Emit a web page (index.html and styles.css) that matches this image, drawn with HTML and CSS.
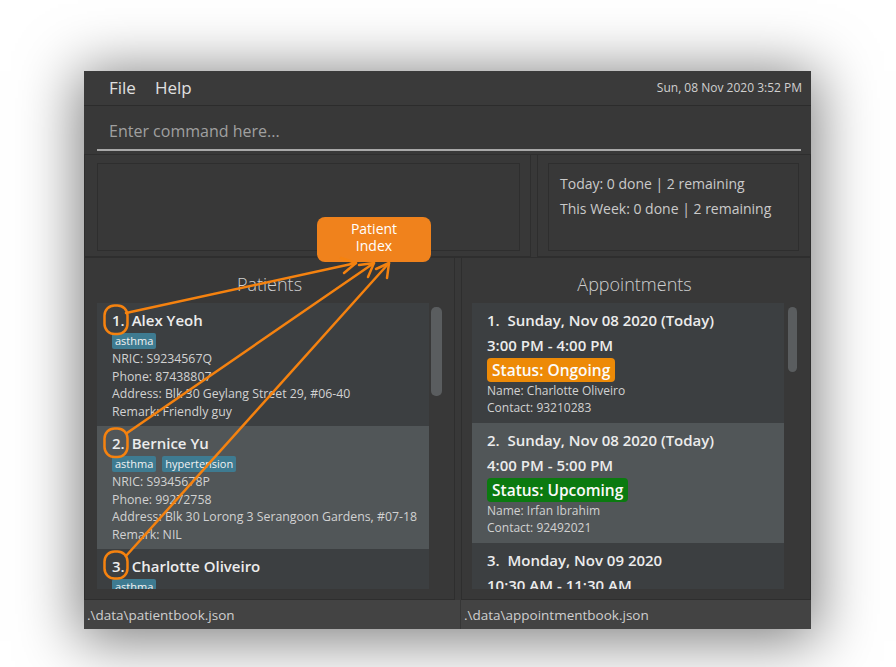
FILE: index.html
```html
<!DOCTYPE html>
<html>
<head>
<meta charset="utf-8">
<link rel="stylesheet" href="styles.css">
</head>
<body>
<div class="window">
  <div class="menubar">
    <div class="menus"><span>File</span><span>Help</span></div>
    <div class="clock">Sun, 08 Nov 2020 3:52 PM</div>
  </div>
  <div class="command">
    <div class="cmd-input">Enter command here...</div>
  </div>
  <div class="top-row">
    <div class="pane pane-left"><div class="box"></div></div>
    <div class="pane pane-right">
      <div class="box stats">
        <div>Today: 0 done | 2 remaining</div>
        <div>This Week: 0 done | 2 remaining</div>
      </div>
    </div>
  </div>
  <div class="lists">
    <div class="panel panel-left">
      <div class="panel-title">Patients</div>
      <div class="list-wrap">
        <div class="list">
          <div class="pcard dark">
            <div class="pname"><span class="idx">1.</span>Alex Yeoh</div>
            <div class="tags"><span class="tag">asthma</span></div>
            <div class="line">NRIC: S9234567Q</div>
            <div class="line">Phone: 87438807</div>
            <div class="line">Address: Blk 30 Geylang Street 29, #06-40</div>
            <div class="line">Remark: Friendly guy</div>
          </div>
          <div class="pcard light">
            <div class="pname"><span class="idx">2.</span>Bernice Yu</div>
            <div class="tags"><span class="tag">asthma</span><span class="tag">hypertension</span></div>
            <div class="line">NRIC: S9345678P</div>
            <div class="line">Phone: 99272758</div>
            <div class="line">Address: Blk 30 Lorong 3 Serangoon Gardens, #07-18</div>
            <div class="line">Remark: NIL</div>
          </div>
          <div class="pcard dark last">
            <div class="pname"><span class="idx">3.</span>Charlotte Oliveiro</div>
            <div class="tags"><span class="tag">asthma</span></div>
          </div>
        </div>
        <div class="scroll"><div class="thumb thumb-left"></div></div>
      </div>
    </div>
    <div class="panel panel-right">
      <div class="panel-title">Appointments</div>
      <div class="list-wrap">
        <div class="list">
          <div class="acard dark">
            <div class="adate">1.&nbsp; Sunday, Nov 08 2020 (Today)</div>
            <div class="atime">3:00 PM - 4:00 PM</div>
            <div class="status ongoing">Status: Ongoing</div>
            <div class="aline">Name: Charlotte Oliveiro</div>
            <div class="aline">Contact: 93210283</div>
          </div>
          <div class="acard light">
            <div class="adate">2.&nbsp; Sunday, Nov 08 2020 (Today)</div>
            <div class="atime">4:00 PM - 5:00 PM</div>
            <div class="status upcoming">Status: Upcoming</div>
            <div class="aline">Name: Irfan Ibrahim</div>
            <div class="aline">Contact: 92492021</div>
          </div>
          <div class="acard dark last">
            <div class="adate">3.&nbsp; Monday, Nov 09 2020</div>
            <div class="atime">10:30 AM - 11:30 AM</div>
          </div>
        </div>
        <div class="scroll"><div class="thumb thumb-right"></div></div>
      </div>
    </div>
  </div>
  <div class="statusbar">
    <div class="sb sb-left">.\data\patientbook.json</div>
    <div class="sb sb-right">.\data\appointmentbook.json</div>
  </div>
</div>

<div class="callout">Patient<br>Index</div>
<svg class="annot" width="896" height="667" viewBox="0 0 896 667">
  <g fill="none" stroke="#f5820f" stroke-width="2.5" stroke-linecap="round" stroke-linejoin="round">
    <rect x="104.5" y="305.5" width="23" height="28.5" rx="10"/>
    <rect x="104.5" y="428.5" width="23" height="28.5" rx="10"/>
    <rect x="104.5" y="551.5" width="23" height="27" rx="10"/>
    <line x1="126" y1="313" x2="356" y2="263"/>
    <polyline points="341,258 356,263 344,273"/>
    <line x1="127" y1="433" x2="374" y2="263"/>
    <polyline points="359,265 374,263 368,277"/>
    <line x1="126" y1="556" x2="389" y2="263"/>
    <polyline points="376,269 389,263 387,278"/>
  </g>
</svg>
</body>
</html>
```
FILE: styles.css
```css
* { box-sizing: border-box; }
html, body { margin: 0; padding: 0; }
body {
  width: 896px;
  height: 667px;
  background: #ffffff;
  font-family: "Open Sans", "Noto Sans", sans-serif;
  position: relative;
  overflow: hidden;
  padding-top: 71px;
  padding-left: 84px;
}
.window {
  width: 727px;
  height: 558px;
  background: #383838;
  display: flex;
  flex-direction: column;
  box-shadow: 0 6px 55px 6px rgba(0, 0, 0, 0.5);
}
.menubar {
  height: 35px;
  flex: none;
  background: #3a3a3a;
  border-bottom: 1px solid #2c2c2c;
  display: flex;
  align-items: center;
  justify-content: space-between;
  padding: 0 9px 1px 25px;
}
.menus { display: flex; gap: 19px; color: #e0e0e0; font-size: 17px; }
.clock { color: #d0d0d0; font-size: 12px; }
.command {
  height: 49px;
  flex: none;
  padding: 6px 10px 3px 13px;
  background: #383838;
  border-bottom: 1px solid #2e2e2e;
}
.cmd-input {
  height: 100%;
  border-bottom: 2px solid #a8a8a8;
  color: #a0a0a0;
  font-size: 16px;
  padding-left: 12px;
  display: flex;
  align-items: center;
}
.top-row {
  height: 103px;
  flex: none;
  display: flex;
  gap: 6px;
  border-bottom: 1px solid #2e2e2e;
}
.pane {
  border: 1px solid #2e2e2e;
  border-top: none;
  padding: 8px 10px 5px 12px;
  display: flex;
}
.pane-left { width: 447px; }
.pane-right { flex: 1; padding: 8px 11px 5px 10px; }
.box {
  flex: 1;
  border: 1px solid #2e2e2e;
}
.stats {
  color: #cacaca;
  font-size: 14px;
  line-height: 24.5px;
  padding: 8px 0 0 11px;
}
.lists {
  flex: 1;
  display: flex;
  gap: 6px;
  min-height: 0;
}
.panel {
  border: 1px solid #2e2e2e;
  border-top: none;
  display: flex;
  flex-direction: column;
  padding-bottom: 10px;
}
.panel-left { width: 371px; padding-left: 12px; padding-right: 12px; }
.panel-right { flex: 1; padding-left: 10px; padding-right: 13px; }
.panel-title {
  height: 45px;
  flex: none;
  text-align: center;
  color: #cfcfcf;
  font-size: 18px;
  font-weight: 300;
  line-height: 53px;
}
.list-wrap {
  flex: 1;
  display: flex;
  min-height: 0;
}
.list {
  flex: 1;
  overflow: hidden;
  background: #3c3f41;
}
.scroll { width: 13px; flex: none; padding: 4px 0 0 2px; }
.panel-right .scroll { padding-left: 4px; }
.thumb { width: 11px; background: #5a5d5f; border-radius: 5px; }
.panel-right .thumb { width: 9px; }
.thumb-left { height: 89px; }
.thumb-right { height: 65px; }
.dark { background: #3c3f41; }
.light { background: #515658; }
.pcard {
  height: 123px;
  padding: 6px 15px 0 15px;
  color: #d2d2d2;
  font-size: 12.3px;
}
.pcard.last { height: 41px; overflow: hidden; }
.acard.last { height: 47px; overflow: hidden; }
.pname {
  height: 22px;
  line-height: 22px;
  font-size: 15px;
  font-weight: 600;
  color: #ececec;
}
.idx { margin-right: 7px; }
.tags { display: flex; gap: 6px; margin-top: 2px; height: 16px; margin-bottom: 1px; }
.tag {
  background: #3e7b91;
  color: #f2f2f2;
  font-size: 11px;
  line-height: 16px;
  padding: 0 3px;
  border-radius: 2px;
}
.line { line-height: 17.5px; height: 17.5px; white-space: nowrap; }
.acard {
  height: 120px;
  padding: 6px 15px 0 15px;
  color: #d2d2d2;
}
.adate, .atime {
  font-size: 15px;
  font-weight: 600;
  color: #ececec;
  line-height: 22px;
  height: 22px;
  white-space: nowrap;
}
.atime { margin-top: 3px; }
.status {
  display: inline-block;
  margin-top: 2px;
  height: 24px;
  line-height: 24px;
  padding: 0 5px;
  border-radius: 4px;
  color: #fbfbfb;
  font-size: 15.5px;
  font-weight: 600;
}
.ongoing { background: #ed8a07; }
.upcoming { background: #0b7a10; }
.aline { font-size: 12px; line-height: 17px; height: 17px; }
.statusbar {
  height: 29px;
  flex: none;
  display: flex;
  background: #434343;
  color: #cfcfcf;
  font-size: 13.5px;
}
.sb { display: flex; align-items: center; }
.sb-left { width: 377px; padding-left: 3px; border-right: 1px solid #363636; }
.sb-right { flex: 1; padding-left: 3px; }
.callout {
  position: absolute;
  left: 317px;
  top: 217px;
  width: 114px;
  height: 45px;
  background: #f0821c;
  border-radius: 8px;
  color: #fff;
  font-size: 14px;
  line-height: 17px;
  text-align: center;
  padding-top: 3px;
}
.annot {
  position: absolute;
  left: 0;
  top: 0;
  pointer-events: none;
}
```
